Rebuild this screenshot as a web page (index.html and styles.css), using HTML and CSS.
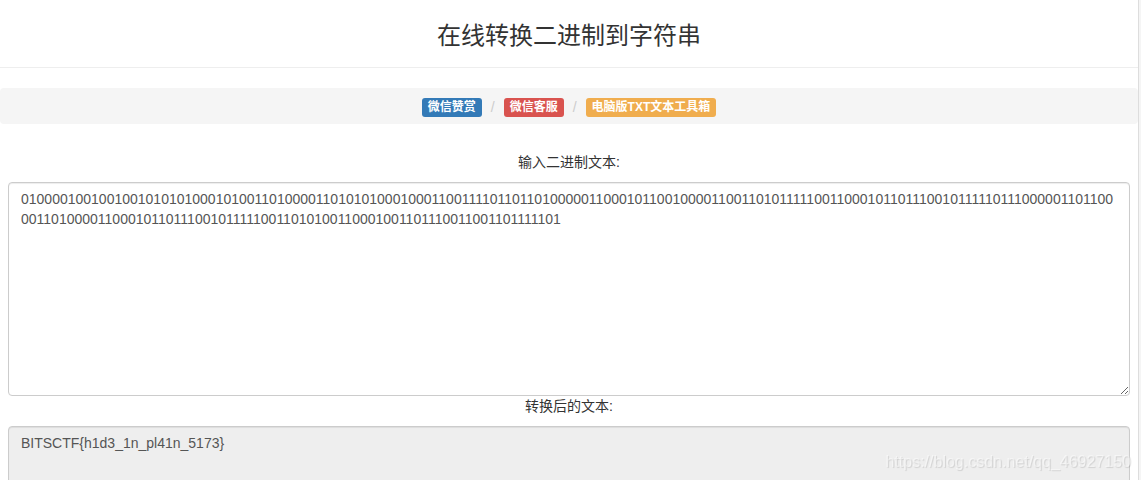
FILE: index.html
```html
<!DOCTYPE html>
<html lang="zh-CN">
<head>
    <meta charset="UTF-8">
    <meta name="viewport" content="width=device-width, initial-scale=1.0">
    <title>在线转换二进制到字符串</title>
    <link rel="stylesheet" href="styles.css">
</head>
<body>
    <div class="page-header">
        <h3>在线转换二进制到字符串</h3>
    </div>

    <ol class="breadcrumb">
        <li><a class="label label-primary" href="#">微信赞赏</a></li>
        <li><a class="label label-danger" href="#">微信客服</a></li>
        <li><a class="label label-warning" href="#">电脑版TXT文本工具箱</a></li>
    </ol>

    <form class="converter">
        <label for="source">输入二进制文本:</label>
        <textarea class="form-control" id="source" rows="10" spellcheck="false">010000100100100101010100010100110100001101010100010001100111101101101000001100010110010000110011010111110011000101101110010111110111000001101100001101000011000101101110010111110011010100110001001101110011001101111101</textarea>
        <label for="result">转换后的文本:</label>
        <textarea class="form-control" id="result" rows="10" readonly>BITSCTF{h1d3_1n_pl41n_5173}</textarea>
    </form>

    <div class="watermark">https://blog.csdn.net/qq_46927150</div>
</body>
</html>
```

FILE: styles.css
```css
* {
    box-sizing: border-box;
}

html {
    height: 100%;
    background: #f5f5f5;
    overflow: hidden;
}

body {
    min-height: 100%;
    margin: 0 2px 0 0;
    border-right: 1px solid #ddd;
    background: #fff;
    color: #333;
    font-family: "Liberation Sans", "Noto Sans CJK SC", sans-serif;
    font-size: 14px;
    line-height: 20px;
}

.page-header {
    padding: 21px 0 16px;
    margin-bottom: 20px;
    border-bottom: 1px solid #eee;
    text-align: center;
}

.page-header h3 {
    margin: 0;
    font-size: 24px;
    font-weight: 400;
    line-height: 30px;
}

.breadcrumb {
    display: flex;
    justify-content: center;
    margin: 0 0 28px;
    padding: 10px 0 7px;
    border-radius: 4px;
    background: #f5f5f5;
    line-height: 19px;
    list-style: none;
}

.breadcrumb li {
    display: flex;
    align-items: center;
}

.breadcrumb li + li::before {
    content: "/";
    padding: 0 9px;
    color: #ccc;
}

.label {
    padding: 0 6px;
    border-radius: 3px;
    color: #fff;
    font-size: 12px;
    font-weight: 700;
    text-decoration: none;
}

.label-primary { background: #337ab7; }
.label-danger { background: #d9534f; }
.label-warning { background: #f0ad4e; }

.converter {
    padding: 0 8px;
}

.converter label {
    display: block;
    margin-bottom: 10px;
    text-align: center;
}

.form-control {
    display: block;
    width: 100%;
    padding: 6px 12px;
    border: 1px solid #ccc;
    border-radius: 4px;
    outline: none;
    background: #fff;
    box-shadow: inset 0 1px 1px rgba(0, 0, 0, 0.075);
    color: #555;
    font: inherit;
    overflow: auto;
}

.form-control[readonly] {
    background: #eee;
}

.watermark {
    position: fixed;
    right: 10px;
    bottom: 8px;
    color: rgba(255, 255, 255, 0.5);
    font-size: 16px;
    text-shadow: 1px 1px 1px rgba(0, 0, 0, 0.12);
    pointer-events: none;
}
```
